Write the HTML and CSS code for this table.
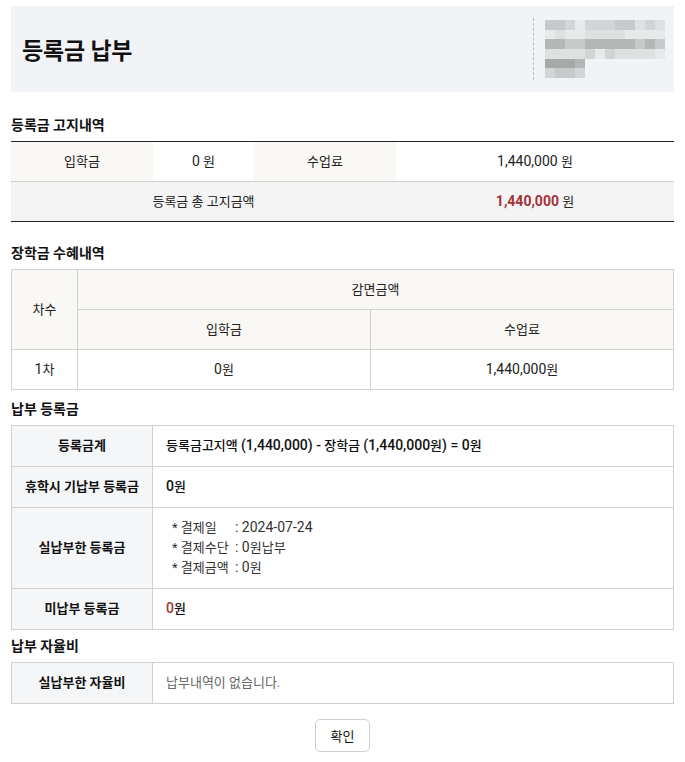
FILE: index.html
```html
<!DOCTYPE html>
<html lang="ko">
<head>
<meta charset="utf-8">
<link rel="stylesheet" href="styles.css">
</head>
<body>
<div class="page">
  <header class="hero">
    <h1 class="hero-title">등록금 납부</h1>
    <div class="hero-side">
      <div class="blur">
        <i class="b2"></i><i class="b2"></i><i class="b3"></i><i class="b5"></i><i class="b3"></i><i class="b3"></i><i class="b3"></i><i class="b2"></i><i class="b2"></i><i class="b4"></i><i class="b3"></i><i class="b4"></i>
        <i class="b5"></i><i class="b4"></i><i class="b5"></i><i class="b5"></i><i class="b4"></i><i class="b4"></i><i class="b4"></i><i class="b4"></i><i class="b5"></i><i class="b5"></i><i class="b5"></i><i class="b5"></i>
        <i class="b1"></i><i class="b1"></i><i class="b2"></i><i class="b2"></i><i class="b1"></i><i class="b1"></i><i class="b1"></i><i class="b1"></i><i class="b1"></i><i class="b2"></i><i class="b1"></i><i class="b2"></i>
        <i class="b4"></i><i class="b4"></i><i class="b4"></i><i class="b4"></i><i class="b3"></i><i class="b5"></i><i class="b3"></i><i class="b4"></i><i class="b4"></i><i class="b4"></i><i class="b4"></i><i class="b5"></i>
        <i class="b0"></i><i class="b0"></i><i class="b0"></i><i class="b1"></i><i class="e"></i><i class="e"></i><i class="e"></i><i class="e"></i><i class="e"></i><i class="e"></i><i class="e"></i><i class="e"></i>
        <i class="b3"></i><i class="b2"></i><i class="b2"></i><i class="b3"></i><i class="e"></i><i class="e"></i><i class="e"></i><i class="e"></i><i class="e"></i><i class="e"></i><i class="e"></i><i class="e"></i>
      </div>
    </div>
  </header>

  <h2 class="sec sec-first">등록금 고지내역</h2>
  <table class="notice">
    <colgroup><col class="c142"><col class="c101"><col class="c142"><col></colgroup>
    <tr>
      <th class="beige">입학금</th>
      <td><span class="num">0</span> 원</td>
      <th class="beige">수업료</th>
      <td><span class="num">1,440,000</span> 원</td>
    </tr>
    <tr class="total">
      <td colspan="3">등록금 총 고지금액</td>
      <td><b class="red num">1,440,000</b> 원</td>
    </tr>
  </table>

  <h2 class="sec sec-after-notice">장학금 수혜내역</h2>
  <table class="grid">
    <colgroup><col class="c66"><col class="c293"><col></colgroup>
    <tr>
      <th rowspan="2" class="beige">차수</th>
      <th colspan="2" class="beige">감면금액</th>
    </tr>
    <tr>
      <th class="beige">입학금</th>
      <th class="beige">수업료</th>
    </tr>
    <tr>
      <td><span class="num">1</span>차</td>
      <td><span class="num">0</span>원</td>
      <td><span class="num">1,440,000</span>원</td>
    </tr>
  </table>

  <h2 class="sec sec-mid">납부 등록금</h2>
  <table class="kv">
    <colgroup><col class="c141"><col></colgroup>
    <tr>
      <th>등록금계</th>
      <td class="strong">등록금고지액 <span class="num">(1,440,000) -</span> 장학금 <span class="num">(1,440,000</span>원<span class="num">) = 0</span>원</td>
    </tr>
    <tr>
      <th>휴학시 기납부 등록금</th>
      <td class="strong"><span class="num">0</span>원</td>
    </tr>
    <tr>
      <th>실납부한 등록금</th>
      <td>
        <ul class="pay">
          <li><span class="lbl">* 결제일</span><span class="num">: 2024-07-24</span></li>
          <li><span class="lbl">* 결제수단</span><span class="num">: 0</span>원납부</li>
          <li><span class="lbl">* 결제금액</span><span class="num">: 0</span>원</li>
        </ul>
      </td>
    </tr>
    <tr>
      <th>미납부 등록금</th>
      <td class="strong"><span class="red num">0</span>원</td>
    </tr>
  </table>

  <h2 class="sec sec-last">납부 자율비</h2>
  <table class="kv">
    <colgroup><col class="c141"><col></colgroup>
    <tr>
      <th>실납부한 자율비</th>
      <td class="muted">납부내역이 없습니다.</td>
    </tr>
  </table>

  <div class="actions">
    <button class="btn" type="button">확인</button>
  </div>
</div>
</body>
</html>
```

FILE: styles.css
```css
* { box-sizing: border-box; }
html, body { margin: 0; padding: 0; background: #fff; }
body {
  font-family: Roboto, "Noto Sans CJK KR", sans-serif;
  font-size: 13px;
  color: #222;
}
.page { padding: 6px 11px 0 11px; }

.hero {
  height: 86px;
  background: #f2f3f6;
  display: flex;
  align-items: center;
  justify-content: space-between;
  padding: 0 9px 0 11px;
}
.hero-title {
  margin: 0;
  font-size: 23px;
  font-weight: 700;
  color: #111;
  letter-spacing: -0.2px;
}
.hero-side {
  height: 62px;
  display: flex;
  align-items: center;
  border-left: 1px dashed #bdbdbd;
  padding-left: 11px;
}
.blur {
  display: grid;
  grid-template-columns: repeat(12, 10px);
  grid-auto-rows: 9.7px;
  width: 120px;
}
.blur i { display: block; }
.b0 { background: #a7a8a8; }
.b1 { background: #b5b6b6; }
.b2 { background: #c8c9ca; }
.b3 { background: #d3d4d5; }
.b4 { background: #dfe0e2; }
.b5 { background: #e8e9eb; }
.e { background: transparent; }

.sec {
  margin: 0 0 6px 0;
  font-size: 14px;
  font-weight: 700;
  line-height: 20px;
  color: #111;
}
.sec-first { margin-top: 23px; }
.sec-after-notice { margin-top: 21px; }
.sec-mid { margin-top: 9px; }
.sec-last { margin-top: 6px; }

table {
  width: 100%;
  border-collapse: collapse;
  table-layout: fixed;
}
.c142 { width: 142px; }
.c101 { width: 101px; }
.c66 { width: 66px; }
.c293 { width: 293px; }
.c141 { width: 141px; }

th, td {
  font-weight: 400;
  line-height: 20px;
  text-align: center;
  vertical-align: middle;
  color: #222;
}
.num { font-size: 14px; line-height: 1; }
.beige { background: #f9f8f4; }

.notice { border-top: 1px solid #222; border-bottom: 1px solid #222; }
.notice th, .notice td { height: 40px; padding: 0; }
.notice tr + tr td { border-top: 1px solid #cfcfcf; }
.notice .total td { background: #f4f4f5; }
.red { color: #a3323a; }
.notice b.red { font-weight: 700; }

.grid { border: 1px solid #d2d2d2; }
.grid th, .grid td { border: 1px solid #d2d2d2; height: 40px; padding: 0; }

.kv { border: 1px solid #d2d2d2; }
.kv th, .kv td { border: 1px solid #d2d2d2; padding: 10px 13px; }
.kv th { background: #f5f6f8; font-weight: 700; color: #111; padding: 10px 2px; white-space: nowrap; }
.kv td { text-align: left; }
.kv td.strong { font-weight: 500; color: #111; }
.kv td.muted { color: #666; }

.pay { list-style: none; margin: 0; padding: 0 0 0 6px; }
.pay li { line-height: 20px; color: #333; }
.lbl { display: inline-block; width: 63px; }

.actions {
  display: flex;
  justify-content: center;
  padding-top: 15px;
}
.btn {
  width: 55px;
  height: 33px;
  border: 1px solid #cfcfcf;
  border-radius: 5px;
  background: #fff;
  font-family: Roboto, "Noto Sans CJK KR", sans-serif;
  font-size: 13px;
  color: #111;
  padding: 0;
}
```
